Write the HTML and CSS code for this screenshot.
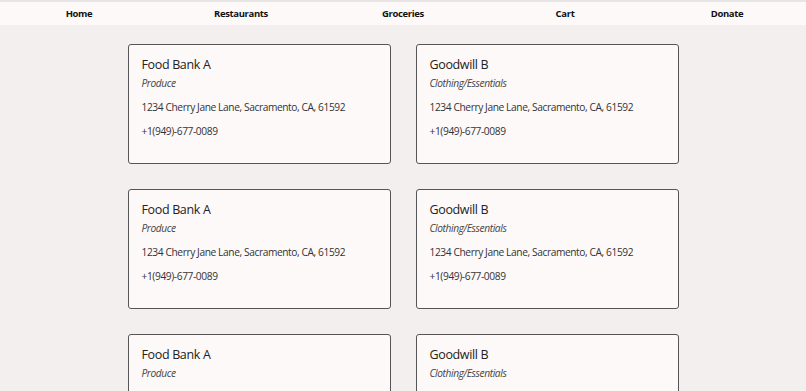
FILE: index.html
```html
<!DOCTYPE html>
<html lang="en">
<head>
    <meta charset="UTF-8">
    <meta name="viewport" content="width=device-width, initial-scale=1.0">
    <title>Community Resources</title>
    <link rel="stylesheet" href="styles.css">
</head>
<body>
    <nav class="topnav">
        <a href="#home">Home</a>
        <a href="#restaurants">Restaurants</a>
        <a href="#groceries">Groceries</a>
        <a href="#cart">Cart</a>
        <a href="#donate">Donate</a>
    </nav>

    <main class="listings">
        <div class="card">
            <h2>Food Bank A</h2>
            <p class="category">Produce</p>
            <p>1234 Cherry Jane Lane, Sacramento, CA, 61592</p>
            <p>+1(949)-677-0089</p>
        </div>
        <div class="card">
            <h2>Goodwill B</h2>
            <p class="category">Clothing/Essentials</p>
            <p>1234 Cherry Jane Lane, Sacramento, CA, 61592</p>
            <p>+1(949)-677-0089</p>
        </div>
        <div class="card">
            <h2>Food Bank A</h2>
            <p class="category">Produce</p>
            <p>1234 Cherry Jane Lane, Sacramento, CA, 61592</p>
            <p>+1(949)-677-0089</p>
        </div>
        <div class="card">
            <h2>Goodwill B</h2>
            <p class="category">Clothing/Essentials</p>
            <p>1234 Cherry Jane Lane, Sacramento, CA, 61592</p>
            <p>+1(949)-677-0089</p>
        </div>
        <div class="card">
            <h2>Food Bank A</h2>
            <p class="category">Produce</p>
            <p>1234 Cherry Jane Lane, Sacramento, CA, 61592</p>
            <p>+1(949)-677-0089</p>
        </div>
        <div class="card">
            <h2>Goodwill B</h2>
            <p class="category">Clothing/Essentials</p>
            <p>1234 Cherry Jane Lane, Sacramento, CA, 61592</p>
            <p>+1(949)-677-0089</p>
        </div>
    </main>
</body>
</html>
```

FILE: styles.css
```css
/* Light listing page */
body {
    margin: 0;
    background-color: #f3efef;
    color: #333;
    font-family: "Open Sans", sans-serif;
}
.topnav {
    display: grid;
    grid-template-columns: repeat(5, 162px);
    justify-content: center;
    overflow: hidden;
    height: 23px;
    align-items: center;
    border-top: 2px solid #e8e5e5;
    background-color: #fdf9f9;
}
.topnav a {
    text-align: center;
    color: #111;
    font-size: 9.5px;
    font-weight: 700;
    letter-spacing: -0.35px;
    text-decoration: none;
}
.listings {
    display: grid;
    grid-template-columns: 263px 263px;
    column-gap: 25px;
    row-gap: 25px;
    justify-content: center;
    padding-top: 19px;
}
.card {
    height: 120px;
    box-sizing: border-box;
    padding: 13px 12px 0 13px;
    background-color: #fdf9f9;
    border: 1px solid #555;
    border-radius: 3px;
}
.card h2 {
    margin: 0;
    font-size: 12.5px;
    line-height: 14px;
    font-weight: 400;
    letter-spacing: -0.35px;
    color: #222;
}
.card p {
    margin: 0;
    font-size: 10.2px;
    line-height: 24px;
    letter-spacing: -0.4px;
    color: #333;
    white-space: nowrap;
}
.card .category {
    margin-top: -1px;
    font-style: italic;
    color: #444;
}
```
